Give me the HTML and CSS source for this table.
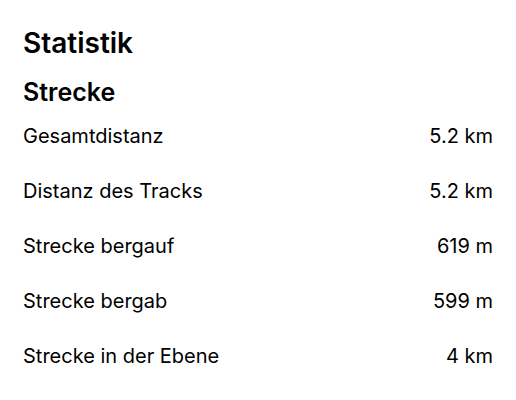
FILE: index.html
```html
<!DOCTYPE html>
<html lang="de">
<head>
<meta charset="utf-8">
<link rel="stylesheet" href="styles.css">
</head>
<body>
<main class="page">
  <h1 class="title">Statistik</h1>
  <h2 class="section">Strecke</h2>
  <ul class="rows">
    <li class="row"><span class="label">Gesamtdistanz</span><span class="value">5.2 km</span></li>
    <li class="row"><span class="label">Distanz des Tracks</span><span class="value">5.2 km</span></li>
    <li class="row"><span class="label">Strecke bergauf</span><span class="value">619 m</span></li>
    <li class="row"><span class="label">Strecke bergab</span><span class="value">599 m</span></li>
    <li class="row"><span class="label">Strecke in der Ebene</span><span class="value">4 km</span></li>
  </ul>
</main>
</body>
</html>
```
FILE: styles.css
```css
html, body {
  margin: 0;
  background: #ffffff;
}
body {
  font-family: Inter, "Liberation Sans", Arial, sans-serif;
  color: #000000;
}
.page {
  padding: 26px 23px 0 23px;
}
.title {
  margin: 0;
  font-size: 28px;
  font-weight: 600;
  line-height: 34px;
}
.section {
  margin: 17px 0 0 0;
  font-size: 25px;
  font-weight: 600;
  line-height: 30px;
}
.rows {
  list-style: none;
  margin: 0;
  padding: 0;
}
.row {
  display: flex;
  justify-content: space-between;
  align-items: center;
  height: 55px;
  font-size: 20px;
}
.row:first-child {
  margin-top: 1px;
}
```
